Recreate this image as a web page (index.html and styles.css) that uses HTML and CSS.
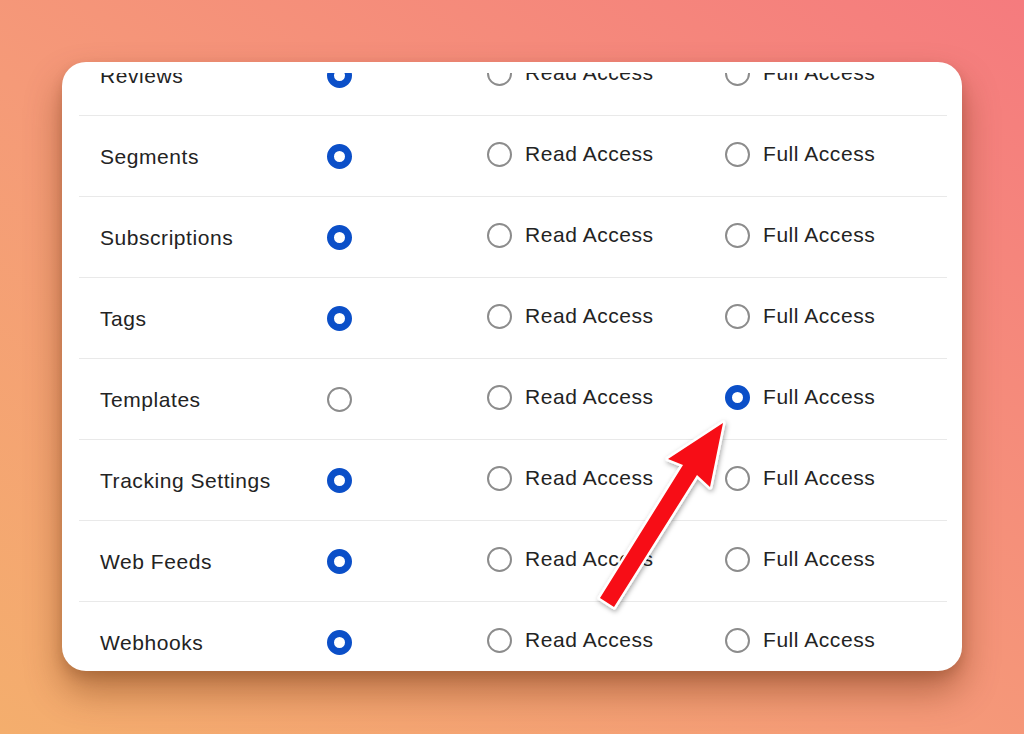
FILE: index.html
```html
<!DOCTYPE html>
<html>
<head>
<meta charset="utf-8">
<link rel="stylesheet" href="styles.css">
</head>
<body>
<div class="card">
  <div class="viewport">
    <div class="rows">
      <div class="row"><span class="label">Reviews</span><span class="radio on"></span><span class="opt"><span class="radio"></span>Read Access</span><span class="opt"><span class="radio"></span>Full Access</span></div>
      <div class="row"><span class="label">Segments</span><span class="radio on"></span><span class="opt"><span class="radio"></span>Read Access</span><span class="opt"><span class="radio"></span>Full Access</span></div>
      <div class="row"><span class="label">Subscriptions</span><span class="radio on"></span><span class="opt"><span class="radio"></span>Read Access</span><span class="opt"><span class="radio"></span>Full Access</span></div>
      <div class="row"><span class="label">Tags</span><span class="radio on"></span><span class="opt"><span class="radio"></span>Read Access</span><span class="opt"><span class="radio"></span>Full Access</span></div>
      <div class="row"><span class="label">Templates</span><span class="radio"></span><span class="opt"><span class="radio"></span>Read Access</span><span class="opt"><span class="radio on"></span>Full Access</span></div>
      <div class="row"><span class="label">Tracking Settings</span><span class="radio on"></span><span class="opt"><span class="radio"></span>Read Access</span><span class="opt"><span class="radio"></span>Full Access</span></div>
      <div class="row"><span class="label">Web Feeds</span><span class="radio on"></span><span class="opt"><span class="radio"></span>Read Access</span><span class="opt"><span class="radio"></span>Full Access</span></div>
      <div class="row"><span class="label">Webhooks</span><span class="radio on"></span><span class="opt"><span class="radio"></span>Read Access</span><span class="opt"><span class="radio"></span>Full Access</span></div>
    </div>
  </div>
</div>
<svg class="arrow" width="1024" height="734" viewBox="0 0 1024 734">
  <defs>
    <filter id="sh" x="-20%" y="-20%" width="140%" height="140%">
      <feDropShadow dx="1" dy="2" stdDeviation="2.5" flood-color="#000" flood-opacity="0.35"/>
    </filter>
  </defs>
  <polygon points="723,423 710,487 697,475 614,607 600,598 683,465 668,459" fill="#f70f12" stroke="#ffffff" stroke-width="5" stroke-linejoin="round" paint-order="stroke" filter="url(#sh)"/>
</svg>
</body>
</html>
```

FILE: styles.css
```css
html, body {
  margin: 0;
  padding: 0;
}
body {
  width: 1024px;
  height: 734px;
  overflow: hidden;
  position: relative;
  background: linear-gradient(to top right, #f4ae6d 0%, #f59a78 45%, #f57b7e 100%);
  font-family: "Liberation Sans", Arial, sans-serif;
  padding: 62px 0 0 62px;
  box-sizing: border-box;
}
.card {
  width: 900px;
  height: 609px;
  background: #ffffff;
  border-radius: 24px;
  overflow: hidden;
  box-shadow: 0 20px 36px rgba(95, 40, 5, 0.42), 0 6px 12px rgba(95, 40, 5, 0.18);
  padding: 11px 15px 0 17px;
  box-sizing: border-box;
}
.viewport {
  height: 598px;
  overflow: hidden;
}
.rows {
  margin-top: -38px;
}
.row {
  display: grid;
  grid-template-columns: 227px 160px 238px 1fr;
  align-items: center;
  height: 80px;
  padding-left: 21px;
  border-bottom: 1px solid #e9e9e9;
  font-size: 21px;
  letter-spacing: 0.55px;
  color: #232323;
}
.label {
  padding-top: 1px;
}
.opt {
  display: flex;
  align-items: center;
  gap: 13px;
  padding-bottom: 4px;
}
.radio {
  display: block;
  width: 25px;
  height: 25px;
  box-sizing: border-box;
  border: 2.6px solid #8c8c8c;
  border-radius: 50%;
}
.radio.on {
  border: 7px solid #0b4fc8;
}
.arrow {
  position: absolute;
  left: 0;
  top: 0;
}
```
